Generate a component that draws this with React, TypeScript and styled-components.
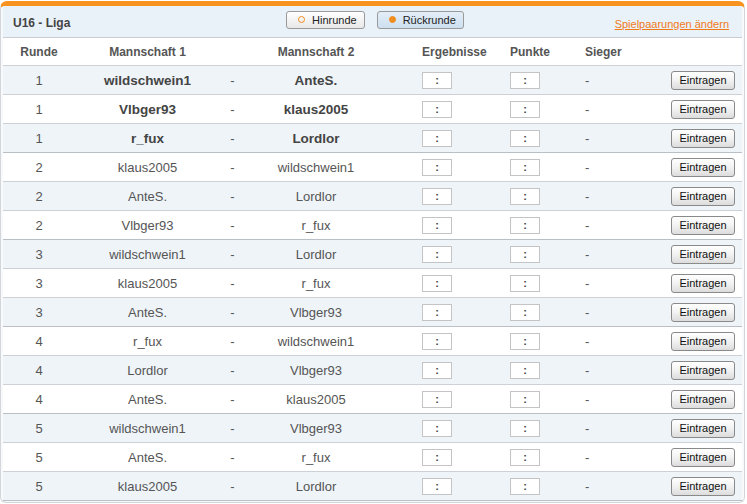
import React from 'react';
import styled, { createGlobalStyle, css } from 'styled-components';

const GlobalStyle = createGlobalStyle`
  body {
    margin: 0;
    background: #ffffff;
    font-family: "Liberation Sans", Arial, sans-serif;
  }
`

const Frame = styled.div`
  box-sizing: border-box;
  width: 745px;
  margin: 1px 0 0 0;
  border: 1px solid #d2d6da;
  border-top: 5px solid #f7931e;
  border-radius: 7px 7px 6px 6px;
  padding: 0 2px 1px 2px;
  background: #f7f9fb;
`

const TopBar = styled.div`
  height: 31px;
  display: flex;
  align-items: center;
  padding: 0 10px;
  border-bottom: 1px solid #c9cdd2;
  background: #e9f1f9;
`

const Title = styled.div`
  font-size: 12px;
  font-weight: bold;
  color: #444;
  width: 273px;
  padding-top: 2px;
`

const Toggles = styled.div`
  display: flex;
  gap: 12px;
  flex: 1;
  margin-top: -4px;
`

const Toggle = styled.button<{ $active?: boolean }>`
  height: 18px;
  box-sizing: border-box;
  display: flex;
  align-items: center;
  gap: 7px;
  padding: 0 7px 0 11px;
  border: 1px solid #9a9a9a;
  border-radius: 3px;
  font-family: inherit;
  font-size: 11px;
  color: #222;
  background: ${({ $active }) =>
    $active
      ? 'linear-gradient(#e4eef8, #cddff0)'
      : 'linear-gradient(#ffffff, #e8e8e8)'};
`

const Dot = styled.span<{ $filled?: boolean }>`
  width: 7px;
  height: 7px;
  box-sizing: border-box;
  border-radius: 50%;
  border: 1.5px solid #f08c1c;
  ${({ $filled }) => $filled && css`background: #f08c1c;`}
`

const Link = styled.a`
  font-size: 11px;
  color: #f07a1a;
  text-decoration: underline;
  padding-top: 4px;
  margin-right: 3px;
`

const Row = styled.div<{ $shade?: boolean; $strong?: boolean }>`
  display: grid;
  grid-template-columns: 72px 145px 25px 142px 123px 75px 75px 1fr;
  align-items: center;
  height: 28px;
  border-bottom: 1px solid ${({ $strong }) => ($strong ? '#babfc5' : '#cdd1d6')};
  background: ${({ $shade }) => ($shade ? '#eff4f9' : '#ffffff')};
  color: #555;
  font-size: 13px;
`

const HeadRow = styled(Row)`
  height: 27px;
  font-size: 12px;
  font-weight: bold;
  color: #555;
  background: #ffffff;
`

const Cell = styled.div<{ $align?: 'left' | 'center' | 'right'; $pad?: number; $bold?: boolean }>`
  padding-left: ${({ $pad }) => $pad || 0}px;
  ${({ $bold }) => $bold && css`font-weight: bold; color: #444; font-size: 13.5px;`}
  display: flex;
  justify-content: ${({ $align }) =>
    $align === 'left' ? 'flex-start' : $align === 'right' ? 'flex-end' : 'center'};
`

const ScoreBox = styled.div`
  width: 30px;
  height: 17px;
  box-sizing: border-box;
  border: 1px solid #c4c4c4;
  background: #fff;
  display: flex;
  align-items: center;
  justify-content: center;
  font-size: 11px;
  font-weight: bold;
  color: #444;
`

const EnterButton = styled.button`
  width: 64px;
  height: 19px;
  margin-right: 7px;
  box-sizing: border-box;
  border: 1px solid #8a8a8a;
  border-radius: 3px;
  background: linear-gradient(#ffffff, #f2f2f2 50%, #dcdcdc);
  font-family: inherit;
  font-size: 11px;
  color: #111;
  padding: 0;
`

const matches: [number, string, string][] = [
  [1, 'wildschwein1', 'AnteS.'],
  [1, 'Vlbger93', 'klaus2005'],
  [1, 'r_fux', 'Lordlor'],
  [2, 'klaus2005', 'wildschwein1'],
  [2, 'AnteS.', 'Lordlor'],
  [2, 'Vlbger93', 'r_fux'],
  [3, 'wildschwein1', 'Lordlor'],
  [3, 'klaus2005', 'r_fux'],
  [3, 'AnteS.', 'Vlbger93'],
  [4, 'r_fux', 'wildschwein1'],
  [4, 'Lordlor', 'Vlbger93'],
  [4, 'AnteS.', 'klaus2005'],
  [5, 'wildschwein1', 'Vlbger93'],
  [5, 'AnteS.', 'r_fux'],
  [5, 'klaus2005', 'Lordlor'],
]

export default function App() {
  return (
    <>
      <GlobalStyle />
      <Frame>
        <TopBar>
          <Title>U16 - Liga</Title>
          <Toggles>
            <Toggle>
              <Dot />
              Hinrunde
            </Toggle>
            <Toggle $active>
              <Dot $filled />
              Rückrunde
            </Toggle>
          </Toggles>
          <Link>Spielpaarungen ändern</Link>
        </TopBar>
        <HeadRow>
          <Cell>Runde</Cell>
          <Cell>Mannschaft 1</Cell>
          <Cell />
          <Cell>Mannschaft 2</Cell>
          <Cell $align="left" $pad={35}>Ergebnisse</Cell>
          <Cell $align="left">Punkte</Cell>
          <Cell $align="left">Sieger</Cell>
          <Cell />
        </HeadRow>
        {matches.map(([round, home, away], i) => {
          const bold = round === 1
          return (
            <Row key={i} $shade={i % 2 === 0} $strong={i % 3 === 2}>
              <Cell>{round}</Cell>
              <Cell $bold={bold}>{home}</Cell>
              <Cell>-</Cell>
              <Cell $bold={bold}>{away}</Cell>
              <Cell $align="left" $pad={35}>
                <ScoreBox>:</ScoreBox>
              </Cell>
              <Cell $align="left">
                <ScoreBox>:</ScoreBox>
              </Cell>
              <Cell $align="left">-</Cell>
              <Cell $align="right">
                <EnterButton>Eintragen</EnterButton>
              </Cell>
            </Row>
          )
        })}
      </Frame>
    </>
  )
}
